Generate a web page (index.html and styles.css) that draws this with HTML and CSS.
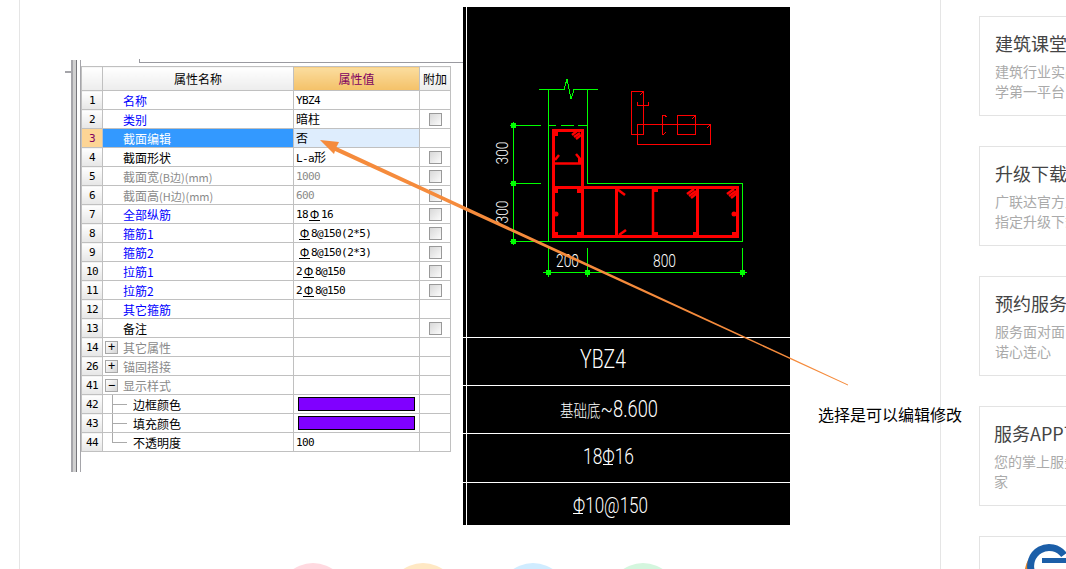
FILE: index.html
```html
<!DOCTYPE html>
<html lang="zh-CN">

<head>
    <meta charset="UTF-8">
    <title>暗柱截面编辑</title>
    <link rel="stylesheet" href="styles.css">
</head>

<body>
    <div class="page">
        <main class="article">
            <div class="shot-row">
                <div class="prop-panel">
                    <span class="panel-stub"></span>
                    <div class="panel-bar"></div>
                    <div class="panel-inner">
                        <div class="top-rule"></div>
                        <table class="prop-table">
                            <colgroup>
                                <col class="col-index">
                                <col class="col-name">
                                <col class="col-value">
                                <col class="col-extra">
                            </colgroup>
                            <thead>
                                <tr>
                                    <th></th>
                                    <th>属性名称</th>
                                    <th class="head-active">属性值</th>
                                    <th>附加</th>
                                </tr>
                            </thead>
                            <tbody>
                                <tr>
                                    <td class="idx">1</td>
                                    <td class="name link">名称</td>
                                    <td class="val">YBZ4</td>
                                    <td></td>
                                </tr>
                                <tr>
                                    <td class="idx">2</td>
                                    <td class="name link">类别</td>
                                    <td class="val"><span class="cjk">暗柱</span></td>
                                    <td class="chk"><span class="checkbox"></span></td>
                                </tr>
                                <tr class="row-active">
                                    <td class="idx">3</td>
                                    <td class="name">截面编辑</td>
                                    <td class="val"><span class="cjk">否</span></td>
                                    <td></td>
                                </tr>
                                <tr>
                                    <td class="idx">4</td>
                                    <td class="name">截面形状</td>
                                    <td class="val">L-a<span class="cjk">形</span></td>
                                    <td class="chk"><span class="checkbox"></span></td>
                                </tr>
                                <tr class="row-muted">
                                    <td class="idx">5</td>
                                    <td class="name">截面宽<span class="unit">(B边)(mm)</span></td>
                                    <td class="val">1000</td>
                                    <td class="chk"><span class="checkbox"></span></td>
                                </tr>
                                <tr class="row-muted">
                                    <td class="idx">6</td>
                                    <td class="name">截面高<span class="unit">(H边)(mm)</span></td>
                                    <td class="val">600</td>
                                    <td class="chk"><span class="checkbox"></span></td>
                                </tr>
                                <tr>
                                    <td class="idx">7</td>
                                    <td class="name link">全部纵筋</td>
                                    <td class="val">18<span class="rebar">Φ</span>16</td>
                                    <td class="chk"><span class="checkbox"></span></td>
                                </tr>
                                <tr>
                                    <td class="idx">8</td>
                                    <td class="name link">箍筋1</td>
                                    <td class="val val-in"><span class="rebar">Φ</span>8@150(2*5)</td>
                                    <td class="chk"><span class="checkbox"></span></td>
                                </tr>
                                <tr>
                                    <td class="idx">9</td>
                                    <td class="name link">箍筋2</td>
                                    <td class="val val-in"><span class="rebar">Φ</span>8@150(2*3)</td>
                                    <td class="chk"><span class="checkbox"></span></td>
                                </tr>
                                <tr>
                                    <td class="idx">10</td>
                                    <td class="name link">拉筋1</td>
                                    <td class="val">2<span class="rebar">Φ</span>8@150</td>
                                    <td class="chk"><span class="checkbox"></span></td>
                                </tr>
                                <tr>
                                    <td class="idx">11</td>
                                    <td class="name link">拉筋2</td>
                                    <td class="val">2<span class="rebar">Φ</span>8@150</td>
                                    <td class="chk"><span class="checkbox"></span></td>
                                </tr>
                                <tr>
                                    <td class="idx">12</td>
                                    <td class="name link">其它箍筋</td>
                                    <td></td>
                                    <td></td>
                                </tr>
                                <tr>
                                    <td class="idx">13</td>
                                    <td class="name">备注</td>
                                    <td></td>
                                    <td class="chk"><span class="checkbox"></span></td>
                                </tr>
                                <tr class="row-muted">
                                    <td class="idx">14</td>
                                    <td class="name"><span class="expander">+</span>其它属性</td>
                                    <td></td>
                                    <td></td>
                                </tr>
                                <tr class="row-muted">
                                    <td class="idx">26</td>
                                    <td class="name"><span class="expander">+</span>锚固搭接</td>
                                    <td></td>
                                    <td></td>
                                </tr>
                                <tr class="row-muted">
                                    <td class="idx">41</td>
                                    <td class="name"><span class="expander">−</span>显示样式</td>
                                    <td></td>
                                    <td></td>
                                </tr>
                                <tr>
                                    <td class="idx">42</td>
                                    <td class="name tree">边框颜色</td>
                                    <td class="swatch-cell"><div class="swatch"></div></td>
                                    <td></td>
                                </tr>
                                <tr>
                                    <td class="idx">43</td>
                                    <td class="name tree">填充颜色</td>
                                    <td class="swatch-cell"><div class="swatch"></div></td>
                                    <td></td>
                                </tr>
                                <tr>
                                    <td class="idx">44</td>
                                    <td class="name tree tree-last">不透明度</td>
                                    <td class="val">100</td>
                                    <td></td>
                                </tr>
                            </tbody>
                        </table>
                    </div>
                </div>

                <svg class="cad" viewBox="463 7 327 518" width="327" height="518">
                    <line class="w" x1="466.5" y1="7" x2="466.5" y2="525" />
                    <line class="w" x1="463" y1="337.5" x2="790" y2="337.5" />
                    <line class="w" x1="463" y1="385.5" x2="790" y2="385.5" />
                    <line class="w" x1="463" y1="433.5" x2="790" y2="433.5" />
                    <line class="w" x1="463" y1="482.5" x2="790" y2="482.5" />

                    <!-- green outline and dimensions -->
                    <g class="g">
                        <polyline points="539,89.5 564,89.5 567,79 571,99 574,89.5 598,89.5" />
                        <polyline points="548.5,89 548.5,241.5 742.5,241.5 742.5,183.5 587.5,183.5 587.5,89" />
                        <line class="dash" x1="548" y1="125.5" x2="587" y2="125.5" />
                        <line x1="513.5" y1="122" x2="513.5" y2="245" />
                        <line x1="510" y1="125.5" x2="541" y2="125.5" />
                        <line x1="510" y1="183.5" x2="541" y2="183.5" />
                        <line x1="510" y1="241.5" x2="548" y2="241.5" />
                        <line x1="543" y1="272.5" x2="747" y2="272.5" />
                        <line x1="548.5" y1="248" x2="548.5" y2="277" />
                        <line x1="587.5" y1="248" x2="587.5" y2="277" />
                        <line x1="742.5" y1="248" x2="742.5" y2="277" />
                    </g>
                    <g class="g-fill">
                        <rect x="511" y="123" width="5" height="5" />
                        <rect x="511" y="181" width="5" height="5" />
                        <rect x="511" y="239" width="5" height="5" />
                        <rect x="546" y="270" width="5" height="5" />
                        <rect x="585" y="270" width="5" height="5" />
                        <rect x="740" y="270" width="5" height="5" />
                    </g>

                    <!-- stirrups -->
                    <g class="r-bold">
                        <polyline points="582.5,187.5 582.5,130.5 553.5,130.5 553.5,236 737.5,236 737.5,187.5 553.5,187.5" />
                        <line x1="582.5" y1="187" x2="582.5" y2="236" />
                        <line x1="616.5" y1="187" x2="616.5" y2="236" />
                        <line x1="697.5" y1="187" x2="697.5" y2="236" />
                    </g>
                    <g class="r-mid">
                        <line x1="553" y1="163.5" x2="583" y2="163.5" />
                        <line x1="653" y1="187" x2="653" y2="236" />
                        <line x1="572" y1="135" x2="577" y2="131" />
                        <line x1="574" y1="137" x2="580" y2="133" />
                        <line x1="576" y1="139" x2="581" y2="135" />
                        <line x1="555" y1="160" x2="559" y2="155" />
                        <line x1="576" y1="154" x2="581" y2="160" />
                        <line x1="617" y1="189" x2="625" y2="195" />
                        <line x1="619" y1="235" x2="626" y2="230" />
                        <line x1="687" y1="194" x2="694" y2="189" />
                        <line x1="689" y1="196" x2="696" y2="191" />
                        <line x1="691" y1="198" x2="697" y2="193" />
                        <line x1="727" y1="194" x2="734" y2="189" />
                        <line x1="729" y1="196" x2="736" y2="191" />
                        <line x1="731" y1="198" x2="737" y2="193" />
                    </g>
                    <g class="r-fill">
                        <rect x="553" y="131" width="5" height="5" />
                        <rect x="578" y="158" width="5" height="5" />
                        <rect x="554" y="189" width="4" height="4" />
                        <rect x="577" y="189" width="5" height="4" />
                        <circle cx="556" cy="214" r="2.5" />
                        <rect x="554" y="232" width="4" height="3" />
                        <rect x="577" y="232" width="5" height="3" />
                        <rect x="654" y="189" width="4" height="3" />
                        <rect x="654" y="232" width="4" height="3" />
                        <rect x="693" y="232" width="3" height="3" />
                        <circle cx="734" cy="214" r="2.5" />
                        <rect x="732" y="232" width="5" height="3" />
                    </g>

                    <!-- small red sketch -->
                    <g class="r-thin">
                        <rect x="631.5" y="91.5" width="12" height="43" />
                        <rect x="637.5" y="124.5" width="73" height="20" />
                        <rect x="677.5" y="115.5" width="18" height="19" />
                        <line x1="662.5" y1="115" x2="662.5" y2="134" />
                        <polyline points="637.5,102 637.5,105.5 648.5,105.5 648.5,102" />
                        <polyline points="662,115.5 665,115.5 667,117" />
                        <polyline points="662,134.5 664,134 666,132" />
                        <line x1="640" y1="95" x2="643" y2="92" />
                        <line x1="692" y1="119" x2="695" y2="116" />
                        <line x1="707" y1="128" x2="710" y2="125" />
                    </g>

                    <text class="t" text-anchor="middle" textLength="23" lengthAdjust="spacingAndGlyphs" font-size="17" transform="translate(508 153) rotate(-90)">300</text>
                    <text class="t" text-anchor="middle" textLength="23" lengthAdjust="spacingAndGlyphs" font-size="17" transform="translate(508 212) rotate(-90)">300</text>
                    <text class="t" x="556" y="267" textLength="23" lengthAdjust="spacingAndGlyphs" font-size="18">200</text>
                    <text class="t" x="653" y="267" textLength="23" lengthAdjust="spacingAndGlyphs" font-size="18">800</text>
                    <text class="t" x="580" y="368" textLength="46" lengthAdjust="spacingAndGlyphs" font-size="25">YBZ4</text>
                    <text class="t" x="560" y="417" textLength="98" lengthAdjust="spacingAndGlyphs" font-size="23"><tspan class="t-cjk" font-size="17">基础底</tspan>~8.600</text>
                    <text class="t" x="583" y="464" textLength="51" lengthAdjust="spacingAndGlyphs" font-size="22">18Φ16</text>
                    <text class="t" x="573" y="513" textLength="75" lengthAdjust="spacingAndGlyphs" font-size="22">Φ10@150</text>
                    <line class="w" x1="603" y1="464.5" x2="613" y2="464.5" />
                    <line class="w" x1="573" y1="513.5" x2="583" y2="513.5" />
                </svg>

                <p class="note">选择是可以编辑修改</p>
            </div>

            <div class="circle-row">
                <span class="circle circle-pink"></span>
                <span class="circle circle-orange"></span>
                <span class="circle circle-blue"></span>
                <span class="circle circle-green"></span>
            </div>
        </main>

        <aside class="side">
            <div class="card">
                <h3>建筑课堂</h3>
                <p>建筑行业实战教<br>学第一平台</p>
            </div>
            <div class="card">
                <h3>升级下载</h3>
                <p>广联达官方正版<br>指定升级下载</p>
            </div>
            <div class="card">
                <h3>预约服务</h3>
                <p>服务面对面，承<br>诺心连心</p>
            </div>
            <div class="card card-app">
                <h3>服务APP下载</h3>
                <p>您的掌上服务专<br>家</p>
            </div>
            <div class="card card-logo">
                <svg class="logo" viewBox="0 0 60 40" width="60" height="40">
                    <path d="M8 19 Q4 26 4 40 L8 40 Z" fill="#e8862a" />
                    <path d="M44 14 A18.5 18.5 0 0 0 12 32 L12 40" fill="none" stroke="#1b5ea8" stroke-width="7" />
                    <rect x="22" y="17" width="38" height="5" fill="#1b5ea8" />
                </svg>
            </div>
        </aside>

        <!-- arrow sits on top of the table and the drawing -->
        <svg class="arrow" viewBox="0 0 1066 569" width="1066" height="569">
            <polygon points="320,140 339,142 336.5,147 848,384.5 848,385.5 335,151 334,154" />
        </svg>
    </div>
</body>

</html>
```

FILE: styles.css
```css
html,
body {
    margin: 0;
    height: 100%;
    overflow: hidden;
    background-color: #fff;
}

body {
    font-family: "Noto Sans CJK SC", "Liberation Sans", sans-serif;
}

.page {
    position: relative;
    display: flex;
    height: 569px;
    padding-left: 19px;
    overflow: hidden;
}

.article {
    flex: none;
    box-sizing: border-box;
    width: 922px;
    height: 569px;
    padding: 7px 0 0 45px;
    border-left: 1px solid #e5e5e5;
    border-right: 1px solid #e5e5e5;
}

.shot-row {
    display: flex;
    align-items: flex-start;
    height: 518px;
}

/* property table */
.prop-panel {
    position: relative;
    flex: none;
    display: flex;
    box-sizing: border-box;
    width: 398px;
    height: 413px;
    margin-top: 52px;
    padding-left: 6px;
}

.panel-stub {
    position: absolute;
    left: 0;
    top: 12px;
    width: 6px;
    height: 2px;
    background-color: #a5a5aa;
}

.panel-bar {
    flex: none;
    box-sizing: border-box;
    width: 6px;
    margin-top: 1px;
    background-color: #d0d0d0;
    border-left: 2px solid #a5a5aa;
    border-right: 1px solid #77777c;
}

.panel-inner {
    flex: 1;
    margin-left: 3px;
    margin-top: 1px;
    border-left: 1px solid #a5a5aa;
}

.top-rule {
    box-sizing: border-box;
    height: 4px;
    margin-left: 58px;
    margin-top: -1px;
    border-left: 1px solid #9a9aa0;
    border-bottom: 1px solid #9a9aa0;
}

.prop-table {
    table-layout: fixed;
    width: 369px;
    margin-top: 3px;
    border-collapse: collapse;
    font-size: 12px;
    color: #000;
    line-height: 14px;
}

.col-index {
    width: 21px;
}

.col-name {
    width: 191px;
}

.col-value {
    width: 126px;
}

.col-extra {
    width: 31px;
}

.prop-table th,
.prop-table td {
    height: 15px;
    padding: 3px 0 0;
    border: 1px solid #c0c0c0;
    white-space: nowrap;
    overflow: hidden;
    vertical-align: top;
}

.prop-table th {
    height: 23px;
    padding: 0;
    line-height: 23px;
    font-weight: normal;
    background: linear-gradient(#fff, #ececec);
}

.prop-table thead tr {
    border-top: 1px solid #a5a5aa;
}

.prop-table .head-active {
    color: #800060;
    background: linear-gradient(#fbdd9f, #f4c168);
}

.prop-table .idx {
    text-align: center;
    font-family: "DejaVu Sans Mono", monospace;
    font-size: 11px;
    letter-spacing: -0.6px;
    background: linear-gradient(#fff, #e6e6e6);
}

.prop-table .name {
    padding-left: 20px;
}

.link {
    color: #0000ff;
}

.unit {
    font-size: 11px;
}

.prop-table .val {
    padding-left: 2px;
    font-family: "DejaVu Sans Mono", "Noto Sans CJK SC", monospace;
    font-size: 11px;
    letter-spacing: -0.6px;
}

.prop-table .val-in {
    padding-left: 4px;
}

.cjk {
    font-family: "Noto Sans CJK SC", sans-serif;
    font-size: 12px;
    line-height: 12px;
    letter-spacing: 0;
}

.rebar {
    display: inline-block;
    box-sizing: border-box;
    width: 11px;
    height: 11px;
    margin: 0 1px;
    font-family: "Liberation Sans", sans-serif;
    font-size: 12px;
    line-height: 10px;
    letter-spacing: 0;
    text-align: center;
    vertical-align: -1px;
    border-bottom: 1px solid currentColor;
}

.prop-table .row-active .idx {
    color: #800060;
    background: #fdd595;
}

.row-active .name {
    color: #fff;
    background-color: #3399ff;
}

.row-active .val {
    background-color: #deedfd;
}

.row-muted .name,
.row-muted .val {
    color: #8a8a8a;
}

.prop-table .chk {
    height: 18px;
    padding: 0;
    text-align: center;
    vertical-align: middle;
    line-height: 0;
}

.checkbox {
    display: inline-block;
    box-sizing: border-box;
    width: 13px;
    height: 13px;
    vertical-align: middle;
    border: 1px solid #999;
    background: linear-gradient(135deg, #d8d8d8, #fbfbfb);
}

.expander {
    position: absolute;
    box-sizing: border-box;
    width: 13px;
    height: 13px;
    margin: 0 0 0 -18px;
    border: 1px solid #a8a8a8;
    background: linear-gradient(135deg, #fff, #d5d5d5);
    color: #000;
    font: 12px/10px "DejaVu Sans Mono", monospace;
    text-align: center;
}

.prop-table .tree {
    position: relative;
    padding-left: 30px;
}

.tree::before {
    content: "";
    position: absolute;
    left: 9px;
    top: 0;
    bottom: 0;
    width: 1px;
    background-color: #aaa;
}

.tree-last::before {
    bottom: 9px;
}

.tree::after {
    content: "";
    position: absolute;
    left: 9px;
    top: 9px;
    width: 15px;
    height: 1px;
    background-color: #aaa;
}

.prop-table .swatch-cell {
    height: 18px;
    padding: 0 4px;
    vertical-align: middle;
}

.swatch {
    box-sizing: border-box;
    height: 14px;
    background-color: #8000ff;
    border: 1px solid #000;
}

/* cad picture */
.cad {
    flex: none;
    display: block;
    background-color: #000;
}

.w {
    stroke: #fff;
    stroke-width: 1;
    shape-rendering: crispEdges;
}

.g {
    fill: none;
    stroke: #00ff00;
    stroke-width: 1;
    shape-rendering: crispEdges;
}

.dash {
    stroke-dasharray: 8 5 13 4 9;
}

.g-fill {
    fill: #00ff00;
}

.r-bold {
    fill: none;
    stroke: #ff0000;
    stroke-width: 3;
    shape-rendering: crispEdges;
}

.r-mid {
    fill: none;
    stroke: #ff0000;
    stroke-width: 2.5;
}

.r-fill {
    fill: #ff0000;
}

.r-thin {
    fill: none;
    stroke: #ff0000;
    stroke-width: 1;
    shape-rendering: crispEdges;
}

.t {
    fill: #fff;
    font-family: Roboto, "Liberation Sans", sans-serif;
    font-weight: 300;
}

.t-cjk {
    font-family: "Noto Sans CJK SC", sans-serif;
}

.note {
    flex: none;
    margin: 396px 0 0 28px;
    font-size: 16px;
    line-height: 22px;
    color: #000;
    white-space: nowrap;
}

.circle-row {
    display: flex;
    gap: 40px;
    margin-top: 38px;
    padding-left: 213px;
}

.circle {
    flex: none;
    width: 70px;
    height: 70px;
    border-radius: 50%;
}

.circle-pink {
    background-color: #ffd9e0;
}

.circle-orange {
    background-color: #ffe8c4;
}

.circle-blue {
    background-color: #d0ecff;
}

.circle-green {
    background-color: #d4f6de;
}

/* right column */
.side {
    flex: none;
    display: flex;
    flex-direction: column;
    gap: 30px;
    width: 240px;
    margin-left: 38px;
    padding-top: 16px;
}

.card {
    flex: none;
    box-sizing: border-box;
    height: 100px;
    padding: 13px 15px 0;
    border: 1px solid #e3e3e3;
}

.card h3 {
    margin: 0 0 5px;
    font-size: 18px;
    font-weight: normal;
    line-height: 26px;
    color: #444;
    white-space: nowrap;
}

.card p {
    margin: 0;
    font-size: 14px;
    line-height: 20px;
    color: #aaa;
    white-space: nowrap;
}

.card-app h3,
.card-app p {
    margin-left: -1px;
}

.card-logo {
    padding: 4px 0 0 40px;
}

.logo {
    display: block;
}

.arrow {
    position: absolute;
    left: 0;
    top: 0;
    pointer-events: none;
}

.arrow polygon {
    fill: #f58b3c;
}
```
